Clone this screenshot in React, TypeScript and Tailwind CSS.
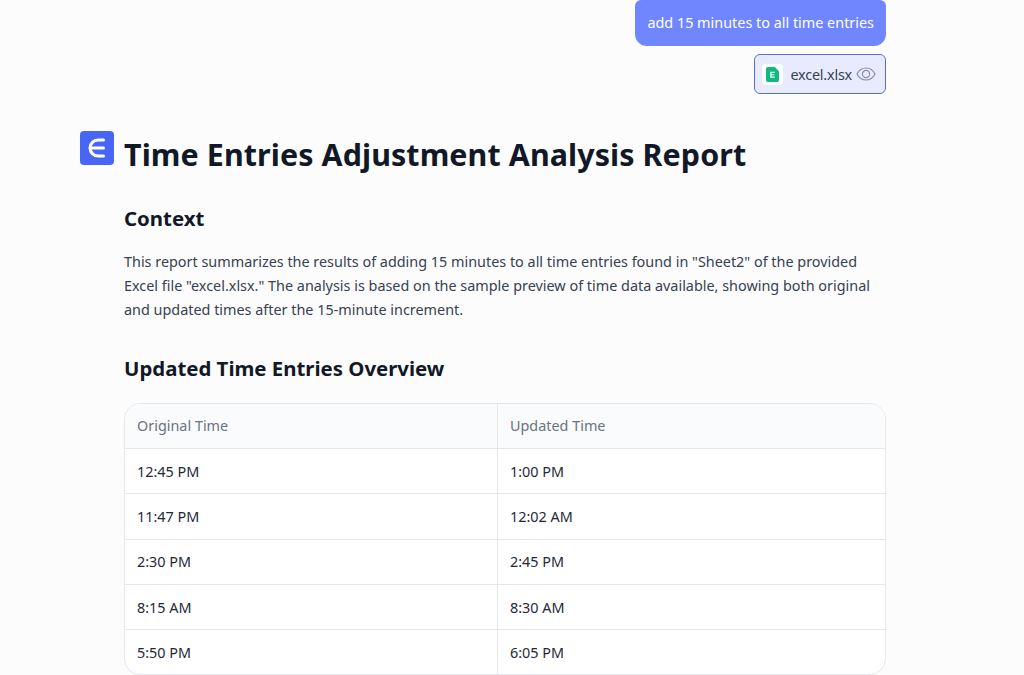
const rows = [
  ["12:45 PM", "1:00 PM"],
  ["11:47 PM", "12:02 AM"],
  ["2:30 PM", "2:45 PM"],
  ["8:15 AM", "8:30 AM"],
  ["5:50 PM", "6:05 PM"],
];

function ExcelIcon() {
  return (
    <svg viewBox="0 0 14 16" className="h-[15px] w-[13px]" aria-hidden="true">
      <path d="M2 0H9.5L14 4.5V14a2 2 0 0 1-2 2H2a2 2 0 0 1-2-2V2a2 2 0 0 1 2-2Z" fill="#10b981" />
      <path d="M4.5 5H9.5V6.4H6V7.6H9V8.9H6V10.2H9.5V11.6H4.5Z" fill="#ecfdf5" />
    </svg>
  );
}

function EyeIcon() {
  return (
    <svg viewBox="0 0 20 14" className="ml-[4px] h-[14px] w-[20px]" fill="none" stroke="#8b93a7" strokeWidth="1.2" aria-hidden="true">
      <path d="M1 7C3 3 6 1 10 1s7 2 9 6c-2 4-5 6-9 6s-7-2-9-6Z" />
      <circle cx="10" cy="7" r="3.6" />
    </svg>
  );
}

function Logo() {
  return (
    <div className="flex size-[34px] shrink-0 items-center justify-center rounded-[4px] bg-[#4766f6]">
      <svg viewBox="0 0 34 34" className="size-[34px]" fill="none" stroke="#ffffff" strokeWidth="3" strokeLinecap="round" aria-hidden="true">
        <path d="M23.5 9H18a8 8 0 0 0 0 16H23.5" />
        <path d="M10.5 17H23.5" />
      </svg>
    </div>
  );
}

export default function App() {
  return (
    <div className="h-[675px] w-[1024px] overflow-hidden bg-[#fcfcfd] font-['Noto_Sans',sans-serif] text-[#111827]">
      <div className="ml-[124px] w-[762px]">
        <div className="flex flex-col items-end">
          <div className="flex h-[46px] items-center rounded-b-[12px] rounded-t-[6px] bg-[#6f86ff] px-[12px] pb-[1px] text-[14.4px] text-white">
            add 15 minutes to all time entries
          </div>
          <div className="mt-[8px] flex h-[40px] items-center rounded-[6px] border border-[#5a6fd8] bg-[#e8ebfd] pl-[7px] pr-[9px]">
            <div className="flex size-[21px] items-center justify-center rounded-[4px] bg-white">
              <ExcelIcon />
            </div>
            <span className="ml-[7px] pt-[1px] text-[14.4px] tracking-[-0.2px] text-[#374151]">excel.xlsx</span>
            <EyeIcon />
          </div>
        </div>

        <div className="relative mt-[37px]">
          <div className="absolute -left-[44px] top-0">
            <Logo />
          </div>
          <h1 className="pt-[2px] text-[30.4px] font-bold leading-[44px] tracking-[0.1px] text-[#111827]">
            Time Entries Adjustment Analysis Report
          </h1>
        </div>

        <h2 className="mt-[27px] text-[20.4px] font-bold leading-[28px] text-[#111827]">Context</h2>
        <p className="mt-[17.5px] text-[14.4px] leading-[24.4px] text-[#374151]">
          This report summarizes the results of adding 15 minutes to all time entries found in "Sheet2" of the provided
          Excel file "excel.xlsx." The analysis is based on the sample preview of time data available, showing both
          original and updated times after the 15-minute increment.
        </p>

        <h2 className="mt-[31.5px] text-[20.4px] font-bold leading-[28px] text-[#111827]">Updated Time Entries Overview</h2>

        <div className="mt-[21px] overflow-hidden rounded-[16px] border border-[#e5e7eb] bg-white text-[14.4px]">
          <div className="grid h-[44px] grid-cols-[373px_1fr] items-center bg-[#f9fbfd] text-[#6b7280]">
            <div className="flex h-full items-center border-r border-[#e5e7eb] pl-[12px]">Original Time</div>
            <div className="pl-[12px]">Updated Time</div>
          </div>
          {rows.map(([original, updated]) => (
            <div key={original} className="grid h-[45.2px] grid-cols-[373px_1fr] items-center border-t border-[#e5e7eb] text-[#1f2937]">
              <div className="flex h-full items-center border-r border-[#e5e7eb] pt-[1px] pl-[12px]">{original}</div>
              <div className="pt-[1px] pl-[12px]">{updated}</div>
            </div>
          ))}
        </div>
      </div>
    </div>
  );
}
